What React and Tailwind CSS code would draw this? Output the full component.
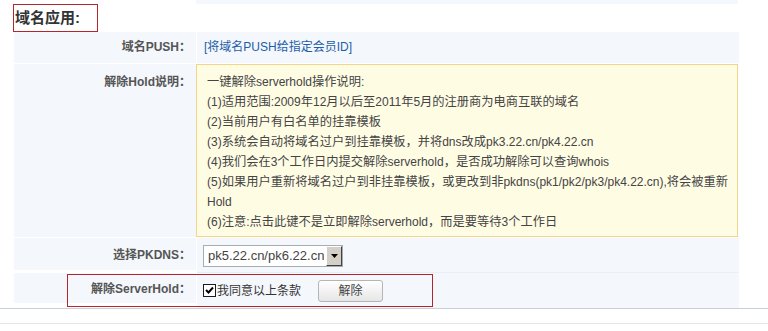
const FONT = { fontFamily: '"Liberation Sans", Arial, "Noto Sans CJK SC", sans-serif' };

const NOTES = [
  "一键解除serverhold操作说明:",
  "(1)适用范围:2009年12月以后至2011年5月的注册商为电商互联的域名",
  "(2)当前用户有白名单的挂靠模板",
  "(3)系统会自动将域名过户到挂靠模板，并将dns改成pk3.22.cn/pk4.22.cn",
  "(4)我们会在3个工作日内提交解除serverhold，是否成功解除可以查询whois",
  "(5)如果用户重新将域名过户到非挂靠模板，或更改到非pkdns(pk1/pk2/pk3/pk4.22.cn),将会被重新",
  "Hold",
  "(6)注意:点击此键不是立即解除serverhold，而是要等待3个工作日",
];

// CJK runs render a touch wider than the latin text, like the old SimSun page
function Mixed({ text }) {
  const parts = text.split(/([\u3000-\u9fff\uff00-\uffef]+)/);
  return parts.map((p, i) =>
    /[\u3000-\u9fff\uff00-\uffef]/.test(p) ? (
      <span key={i} className="text-[12.25px]">{p}</span>
    ) : (
      <span key={i}>{p}</span>
    )
  );
}

function Label({ children, className = "" }) {
  return (
    <div className={`w-[182px] shrink-0 bg-[#f4f7fc] text-right pr-[5px] text-[12px] font-bold text-[#555] ${className}`}>
      {children}
    </div>
  );
}

export default function App() {
  return (
    <div className="relative w-[768px] h-[331px] bg-white overflow-hidden text-[#333]" style={FONT}>
      {/* tail of previous row */}
      <div className="flex h-[4px]">
        <div className="w-[196px]" />
        <div className="w-[542px] bg-[#f4f7fc]" />
      </div>

      {/* section title */}
      <div className="ml-[13px] w-[85px] h-[28px] border border-[#b3262b] pl-px pt-[1px]">
        <span className="text-[15px] font-bold leading-[18px] text-[#333]">域名应用:</span>
      </div>

      <div className="ml-[14px] w-[725px]">
        {/* PUSH */}
        <div className="flex h-[31px] mb-px">
          <Label className="leading-[31px]">域名PUSH：</Label>
          <div className="flex-1 ml-[1px] bg-[#f4f7fc] pl-[7px] text-[12px] leading-[31px] text-[#1d5ea8]">
            [将域名PUSH给指定会员ID]
          </div>
        </div>

        {/* notes */}
        <div className="flex h-[173px]">
          <Label className="pt-[8px] leading-[20px]">解除Hold说明：</Label>
          <div className="flex-1 bg-[#fffce4] border border-[#f2d48a] pl-[10px] pt-[7px] text-[12px] leading-[20px] text-[#444] mr-px">
            {NOTES.map((line, i) => (
              <div key={i} className="whitespace-nowrap">
                <Mixed text={line} />
              </div>
            ))}
          </div>
        </div>

        {/* PKDNS */}
        <div className="flex h-[35px] mt-px">
          <Label className="h-[32px] leading-[34px]">选择PKDNS：</Label>
          <div className="flex-1 ml-[1px] bg-[#f4f7fc] border-b border-[#e9eef5] pl-[6px] pt-[7px]">
            <div className="flex w-[140px] h-[22px] border border-[#a5acb2] bg-white">
              <div className="flex-1 pl-[4px] text-[13px] leading-[20px] text-[#444] whitespace-nowrap overflow-hidden">
                pk5.22.cn/pk6.22.cn
              </div>
              <div className="w-[16px] h-[20px] bg-[#d4d0c8] border border-t-white border-l-white border-r-[#404040] border-b-[#404040] flex items-center justify-center">
                <svg width="7" height="4" viewBox="0 0 7 4">
                  <path d="M0 0h7L3.5 4z" fill="#000" />
                </svg>
              </div>
            </div>
          </div>
        </div>

        {/* ServerHold */}
        <div className="flex h-[35px]">
          <Label className="h-[30px] leading-[32px]">解除ServerHold：</Label>
          <div className="flex-1 ml-[1px] bg-[#f4f7fc] pl-[6px] flex items-center gap-[1px]">
            <div className="w-[13px] h-[13px] border border-[#1c1c1c] bg-white flex items-center justify-center">
              <svg width="9" height="9" viewBox="0 0 9 9">
                <path d="M1 4l2.5 2.5L8 1.5" stroke="#000" strokeWidth="2" fill="none" />
              </svg>
            </div>
            <span className="text-[12px] text-[#333] leading-none">我同意以上条款</span>
            <button className="ml-[16px] w-[65px] h-[22px] rounded-[3px] border border-[#b5b5b5] bg-gradient-to-b from-white to-[#e6e6e6] text-[12px] text-[#444]">
              解除
            </button>
          </div>
        </div>
      </div>

      {/* bottom rules */}
      <div className="h-px bg-[#c8d0d8]" />
      <div className="h-[14px]" />
      <div className="h-px bg-[#e6e6e6]" />

      {/* annotation box */}
      <div className="absolute left-[67px] top-[274px] w-[366px] h-[33px] border border-[#b3262b]" />
    </div>
  );
}
